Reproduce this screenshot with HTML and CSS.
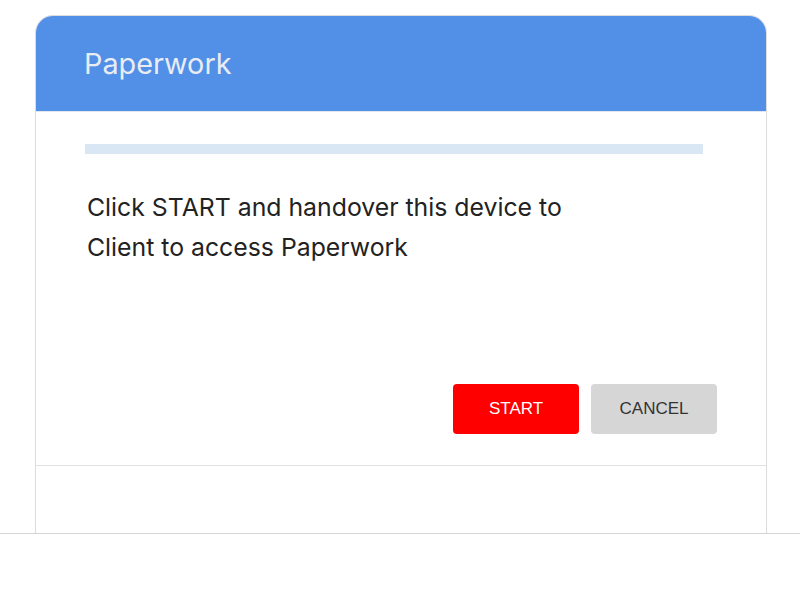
FILE: index.html
```html
<!DOCTYPE html>
<html lang="en">

<head>
  <meta charset="UTF-8">
  <meta name="viewport" content="width=device-width, initial-scale=1.0">
  <title>Paperwork</title>
  <link rel="stylesheet" href="styles.css">
</head>

<body>
  <div class="page">
    <div class="card">
      <div class="card-header">
        <h2 class="card-title">Paperwork</h2>
      </div>
      <div class="card-body">
        <div class="progress"></div>
        <p class="message">Click START and handover this device to<br>Client to access Paperwork</p>
        <div class="actions">
          <button class="btn btn-start">START</button>
          <button class="btn btn-cancel">CANCEL</button>
        </div>
      </div>
      <div class="card-footer"></div>
    </div>
    <div class="page-line"></div>
  </div>
</body>

</html>
```

FILE: styles.css
```css
body {
  margin: 0;
  background-color: #ffffff;
  font-family: Inter, "Noto Sans", sans-serif;
}

.page {
  padding-top: 15px;
}

.card {
  margin: 0 33px 0 35px;
  border: 1px solid #dcdcdc;
  border-bottom: none;
  border-radius: 18px 18px 0 0;
  overflow: hidden;
}

.card-header {
  height: 95px;
  display: flex;
  align-items: center;
  padding-left: 48px;
  background-color: #528fe6;
  border-bottom: 1px solid #e2e6ec;
}

.card-title {
  margin: 0;
  font-size: 28.8px;
  font-weight: 400;
  color: #e9edf3;
}

.card-body {
  padding: 32px 49px 31px 49px;
  border-bottom: 1px solid #e2e2e2;
}

.progress {
  height: 10px;
  margin-right: 14px;
  background-color: #d9e6f3;
}

.message {
  margin: 33px 0 0 2px;
  font-size: 24.8px;
  line-height: 40px;
  color: #222222;
}

.actions {
  display: flex;
  justify-content: flex-end;
  gap: 12px;
  margin-top: 117px;
}

.btn {
  width: 126px;
  height: 50px;
  border: none;
  border-radius: 4px;
  font-family: "Liberation Sans", Arial, sans-serif;
  font-size: 17px;
  cursor: pointer;
}

.btn-start {
  background-color: #ff0000;
  color: #ffffff;
}

.btn-cancel {
  background-color: #d6d6d6;
  color: #333333;
}

.card-footer {
  height: 67px;
}

.page-line {
  border-top: 1px solid #d4d4d4;
}
```
